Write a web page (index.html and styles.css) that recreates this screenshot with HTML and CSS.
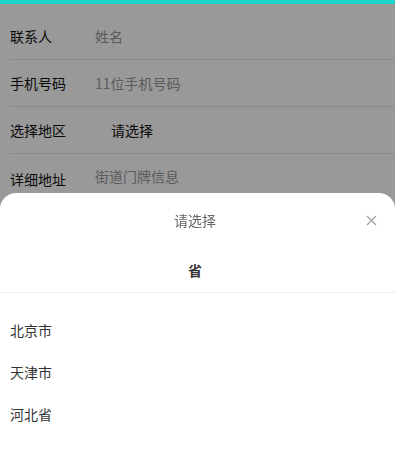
FILE: index.html
```html
<!DOCTYPE html>
<html lang="zh-CN">

<head>
    <meta charset="UTF-8">
    <meta name="viewport" content="width=device-width, initial-scale=1.0">
    <title>收货地址</title>
    <link rel="stylesheet" href="styles.css">
</head>

<body>
    <div class="top-bar"></div>

    <div class="address-form">
        <div class="form-row">
            <div class="form-label">联系人</div>
            <div class="form-value placeholder">姓名</div>
        </div>
        <div class="form-row">
            <div class="form-label">手机号码</div>
            <div class="form-value placeholder">11位手机号码</div>
        </div>
        <div class="form-row">
            <div class="form-label">选择地区</div>
            <div class="form-value picker">请选择</div>
        </div>
        <div class="form-row textarea-row">
            <div class="form-label">详细地址</div>
            <div class="form-value placeholder">街道门牌信息</div>
        </div>
    </div>

    <div class="mask"></div>

    <div class="popup">
        <div class="popup-header">
            <span class="popup-title">请选择</span>
            <span class="popup-close">
                <svg width="11" height="11" viewBox="0 0 11 11">
                    <path d="M1 1 L10 10 M10 1 L1 10" stroke="#a0a0a0" stroke-width="1.2" fill="none" />
                </svg>
            </span>
        </div>
        <div class="popup-tabs">
            <div class="tab active">省</div>
        </div>
        <ul class="area-list">
            <li>北京市</li>
            <li>天津市</li>
            <li>河北省</li>
        </ul>
    </div>
</body>

</html>
```

FILE: styles.css
```css
* {
    margin: 0;
    padding: 0;
    box-sizing: border-box;
    font-family: "Noto Sans CJK SC", "Noto Sans", sans-serif;
}

body {
    background: #fff;
    font-size: 14px;
    color: #333;
}

.top-bar {
    height: 4px;
    background: #1fd6cc;
}

.address-form {
    padding: 9px 2px 0 10px;
}

.form-row {
    display: flex;
    align-items: center;
    height: 47px;
    border-bottom: 1px solid #e6e6e6;
}

.form-row:first-child {
    height: 47px;
}

.textarea-row {
    align-items: flex-start;
    padding-top: 15px;
    border-bottom: none;
}

.form-label {
    width: 85px;
    color: #111;
}

.form-value {
    flex: 1;
}

.placeholder {
    color: #999;
}

.textarea-row .form-value {
    margin-top: -3px;
}

.picker {
    padding-left: 16px;
    color: #111;
}

.mask {
    position: fixed;
    top: 4px;
    left: 0;
    right: 0;
    bottom: 0;
    background: rgba(0, 0, 0, 0.4);
}

.popup {
    position: fixed;
    left: 0;
    right: 0;
    bottom: 0;
    height: 256px;
    background: #fff;
    border-radius: 16px 16px 0 0;
}

.popup-header {
    position: relative;
    height: 54px;
    padding-right: 5px;
    display: flex;
    align-items: center;
    justify-content: center;
}

.popup-title {
    color: #666;
}

.popup-close {
    position: absolute;
    right: 18px;
    top: 22px;
    display: flex;
}

.popup-tabs {
    display: flex;
    justify-content: center;
    height: 46px;
    padding-right: 5px;
    border-bottom: 1px solid #eee;
}

.tab {
    display: flex;
    align-items: center;
    font-weight: bold;
    color: #333;
}

.area-list {
    list-style: none;
    padding: 16px 10px 0;
}

.area-list li {
    height: 42px;
    line-height: 42px;
    color: #333;
}
```
